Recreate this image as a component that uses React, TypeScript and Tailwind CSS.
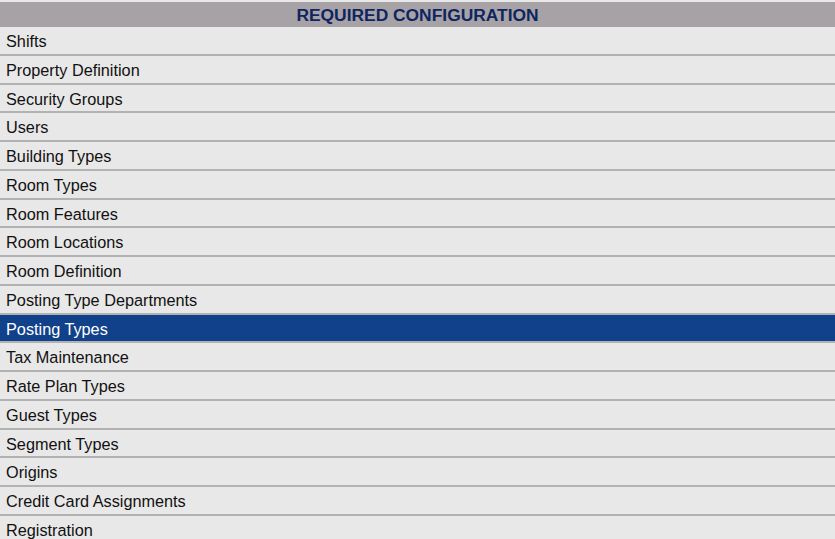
import React from "react";

const items = [
  "Shifts",
  "Property Definition",
  "Security Groups",
  "Users",
  "Building Types",
  "Room Types",
  "Room Features",
  "Room Locations",
  "Room Definition",
  "Posting Type Departments",
  "Posting Types",
  "Tax Maintenance",
  "Rate Plan Types",
  "Guest Types",
  "Segment Types",
  "Origins",
  "Credit Card Assignments",
  "Registration",
];

export default function App() {
  return (
    <div
      className="w-[835px] h-[539px] overflow-hidden bg-[#e8e8e8] pt-[2px]"
      style={{ fontFamily: '"Liberation Sans", Arial, sans-serif' }}
    >
      <div className="h-[25px] bg-[#a7a2a5] flex items-center justify-center pt-[1px] text-[17.4px] font-bold text-[#0e2561]">
        REQUIRED CONFIGURATION
      </div>
      <div className="flex flex-col">
        {items.map((it) => {
          const sel = it === "Posting Types";
          return (
            <div
              key={it}
              className={
                sel
                  ? "h-[28.75px] shrink-0 flex items-center pl-[6px] pt-[2px] text-[16.25px] bg-[#11418b] text-white border-b-2 border-[#b2b2b2]"
                  : "h-[28.75px] shrink-0 flex items-center pl-[6px] pt-[2px] text-[16.25px] bg-[#e8e8e8] text-[#111] border-b-2 border-[#b2b2b2]"
              }
            >
              {it}
            </div>
          );
        })}
      </div>
    </div>
  );
}
